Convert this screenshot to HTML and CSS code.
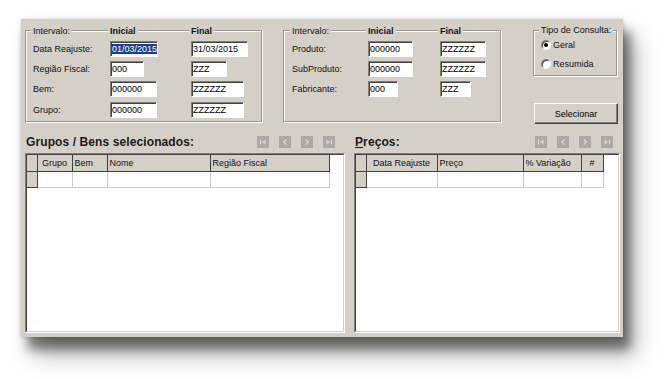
FILE: index.html
```html
<!DOCTYPE html>
<html lang="pt">
<head>
<meta charset="utf-8">
<title>Reajuste de Preços</title>
<link rel="stylesheet" href="styles.css">
</head>
<body>
<div class="window">
  <div class="top">
    <div class="group g1">
      <div class="fields">
        <div class="cap"><span>Intervalo:</span></div>
        <div class="cap b"><span>Inicial</span></div>
        <div class="cap b"><span>Final</span></div>

        <div class="lbl">Data Reajuste:</div>
        <div class="inp w48"><span class="sel">01/03/2015</span></div>
        <div class="inp w57">31/03/2015</div>

        <div class="lbl">Região Fiscal:</div>
        <div class="inp w34">000</div>
        <div class="inp w36">ZZZ</div>

        <div class="lbl">Bem:</div>
        <div class="inp w47">000000</div>
        <div class="inp w53">ZZZZZZ</div>

        <div class="lbl">Grupo:</div>
        <div class="inp w47">000000</div>
        <div class="inp w53">ZZZZZZ</div>
      </div>
    </div>

    <div class="group g2">
      <div class="fields">
        <div class="cap"><span>Intervalo:</span></div>
        <div class="cap b"><span>Inicial</span></div>
        <div class="cap b"><span>Final</span></div>

        <div class="lbl">Produto:</div>
        <div class="inp w45">000000</div>
        <div class="inp w46">ZZZZZZ</div>

        <div class="lbl">SubProduto:</div>
        <div class="inp w45">000000</div>
        <div class="inp w46">ZZZZZZ</div>

        <div class="lbl">Fabricante:</div>
        <div class="inp w30">000</div>
        <div class="inp w31">ZZZ</div>
      </div>
    </div>

    <div class="side">
      <div class="group g3">
        <div class="cap"><span>Tipo de Consulta:</span></div>
        <div class="radio"><span class="dot on"></span>Geral</div>
        <div class="radio r2"><span class="dot"></span>Resumida</div>
      </div>
      <div class="btn">Selecionar</div>
    </div>
  </div>

  <div class="bottom">
    <div class="panel p1">
      <div class="head">
        <h2 class="title">Grupos / Bens selecionados:</h2>
        <div class="nav">
          <svg class="nb" viewBox="0 0 12 12"><rect width="12" height="12" fill="#aba9a5"/><path d="M3.5 3.5v5" stroke="#d9d7d1" stroke-width="1.3"/><path d="M8.5 3.2 5 6l3.5 2.8z" fill="#d9d7d1"/></svg>
          <svg class="nb" viewBox="0 0 12 12"><rect width="12" height="12" fill="#aba9a5"/><path d="M7.3 3.5 4.8 6l2.5 2.5" stroke="#d9d7d1" stroke-width="1.3" fill="none"/></svg>
          <svg class="nb" viewBox="0 0 12 12"><rect width="12" height="12" fill="#aba9a5"/><path d="M4.7 3.5 7.2 6 4.7 8.5" stroke="#d9d7d1" stroke-width="1.3" fill="none"/></svg>
          <svg class="nb" viewBox="0 0 12 12"><rect width="12" height="12" fill="#aba9a5"/><path d="M3.5 3.2 7 6 3.5 8.8z" fill="#d9d7d1"/><path d="M8.5 3.5v5" stroke="#d9d7d1" stroke-width="1.3"/></svg>
        </div>
      </div>
      <div class="gridbox">
        <div class="gridin">
          <table class="t1">
            <colgroup><col class="c10"><col class="c35"><col class="c35"><col class="c103"><col class="c119"></colgroup>
            <thead>
              <tr><th></th><th class="ctr">Grupo</th><th>Bem</th><th>Nome</th><th>Região Fiscal</th></tr>
            </thead>
            <tbody>
              <tr><td class="ind"></td><td></td><td></td><td></td><td></td></tr>
            </tbody>
          </table>
        </div>
      </div>
    </div>

    <div class="panel p2">
      <div class="head">
        <h2 class="title"><u>P</u>reços:</h2>
        <div class="nav">
          <svg class="nb" viewBox="0 0 12 12"><rect width="12" height="12" fill="#aba9a5"/><path d="M3.5 3.5v5" stroke="#d9d7d1" stroke-width="1.3"/><path d="M8.5 3.2 5 6l3.5 2.8z" fill="#d9d7d1"/></svg>
          <svg class="nb" viewBox="0 0 12 12"><rect width="12" height="12" fill="#aba9a5"/><path d="M7.3 3.5 4.8 6l2.5 2.5" stroke="#d9d7d1" stroke-width="1.3" fill="none"/></svg>
          <svg class="nb" viewBox="0 0 12 12"><rect width="12" height="12" fill="#aba9a5"/><path d="M4.7 3.5 7.2 6 4.7 8.5" stroke="#d9d7d1" stroke-width="1.3" fill="none"/></svg>
          <svg class="nb" viewBox="0 0 12 12"><rect width="12" height="12" fill="#aba9a5"/><path d="M3.5 3.2 7 6 3.5 8.8z" fill="#d9d7d1"/><path d="M8.5 3.5v5" stroke="#d9d7d1" stroke-width="1.3"/></svg>
        </div>
      </div>
      <div class="gridbox">
        <div class="gridin">
          <table class="t2">
            <colgroup><col class="c10"><col class="c71"><col class="c86"><col class="c58"><col class="c22"></colgroup>
            <thead>
              <tr><th></th><th class="ctr">Data Reajuste</th><th>Preço</th><th>% Variação</th><th class="ctr">#</th></tr>
            </thead>
            <tbody>
              <tr><td class="ind"></td><td></td><td></td><td></td><td></td></tr>
            </tbody>
          </table>
        </div>
      </div>
    </div>
  </div>
</div>
</body>
</html>
```

FILE: styles.css
```css
* { box-sizing: border-box; }

html { background: #fff; }

body {
  margin: 0;
  padding: 19px 0 42px 21px;
  min-height: 379px;
  background: #fff;
  font-family: "Liberation Sans", Arial, sans-serif;
  font-size: 9px;
  color: #111;
}

.window {
  width: 602px;
  height: 318px;
  background: #d4d0c8;
  padding: 11px 3px 4px 4px;
  display: flex;
  flex-direction: column;
  box-shadow: 7px 12px 10px rgba(0, 0, 0, 0.45), 12px 18px 22px rgba(0, 0, 0, 0.3), 0 0 4px rgba(0, 0, 0, 0.18);
}

/* ---------- top area ---------- */
.top {
  display: flex;
  align-items: flex-start;
  height: 94px;
}

.group {
  border: 1px solid #9a978f;
  box-shadow: inset 1px 1px 0 #fff, 1px 1px 0 #fff;
}

.g1 { width: 237px; height: 92px; padding-left: 7px; }
.g2 { width: 218px; height: 92px; margin-left: 21px; padding-left: 8px; }

.fields {
  display: grid;
  grid-template-rows: 11px repeat(4, 16px);
  row-gap: 4.3px;
  margin-top: -5.5px;
  align-items: center;
}
.g1 .fields { grid-template-columns: 77px 81px 1fr; }
.g2 .fields { grid-template-columns: 76px 72px 1fr; }

.cap {
  height: 11px;
  line-height: 11px;
  white-space: nowrap;
}
.cap span {
  background: #d4d0c8;
  padding: 0 2px;
  margin-left: -2px;
}
.cap.b { font-weight: bold; }

.lbl { white-space: nowrap; }

.inp {
  height: 16px;
  background: #fff;
  border: 1px solid;
  border-color: #808080 #fff #fff #808080;
  box-shadow: inset 1px 1px 0 #404040;
  padding-left: 1px;
  line-height: 14px;
  white-space: nowrap;
  overflow: hidden;
  color: #000;
}
.w30 { width: 30px; } .w31 { width: 31px; } .w34 { width: 34px; } .w36 { width: 36px; }
.w45 { width: 45px; } .w46 { width: 46px; } .w47 { width: 47px; } .w48 { width: 48px; }
.w53 { width: 53px; } .w57 { width: 57px; }

.sel {
  background: #1d3f8a;
  color: #fff;
}

/* right column */
.side {
  margin-left: 32px;
  width: 85px;
  display: flex;
  flex-direction: column;
}
.g3 {
  width: 84px;
  height: 46px;
  padding-left: 7px;
  display: flex;
  flex-direction: column;
}
.g3 .cap { margin-top: -6px; }

.radio {
  display: flex;
  align-items: center;
  gap: 2px;
  height: 12px;
  margin-top: 3px;
  white-space: nowrap;
}
.radio.r2 { margin-top: 7px; }

.dot {
  width: 10px;
  height: 10px;
  border-radius: 50%;
  background: #fff;
  border: 1px solid;
  border-color: #808080 #f4f4f4 #f4f4f4 #808080;
  box-shadow: inset 1px 1px 0 #404040;
  display: flex;
  align-items: center;
  justify-content: center;
}
.dot.on::after {
  content: "";
  width: 4px;
  height: 4px;
  border-radius: 50%;
  background: #000;
}

.btn {
  margin-top: 27px;
  margin-left: 1px;
  width: 84px;
  height: 21px;
  border: 1px solid;
  border-color: #fff #404040 #404040 #fff;
  box-shadow: inset -1px -1px 0 #808080;
  display: flex;
  align-items: center;
  justify-content: center;
  color: #000;
}

/* ---------- bottom area ---------- */
.bottom {
  display: flex;
  gap: 9px;
  margin-top: 7px;
  flex: 1;
}
.panel {
  display: flex;
  flex-direction: column;
}
.p1 { width: 320px; }
.p2 { width: 266px; }

.head {
  height: 22px;
  display: flex;
  align-items: center;
  justify-content: space-between;
  padding-left: 1px;
}
.title {
  margin: 0;
  font-size: 12px;
  font-weight: bold;
  letter-spacing: 0.1px;
  color: #1a1a1a;
}
.title u { text-underline-offset: 1px; }

.nav { display: flex; gap: 10px; }
.p1 .nav { margin-right: 10px; }
.p2 .nav { margin-right: 7px; }
.nb { width: 12px; height: 12px; display: block; }

.gridbox {
  flex: 1;
  border: 1px solid;
  border-color: #808080 #fff #fff #808080;
}
.gridin {
  height: 100%;
  background: #fff;
  border: 1px solid;
  border-color: #404040 #d4d0c8 #d4d0c8 #404040;
}

table {
  border-collapse: collapse;
  table-layout: fixed;
}
.t1 { width: 302px; }
.t2 { width: 247px; }
.c10 { width: 10px; } .c22 { width: 22px; } .c35 { width: 35px; } .c58 { width: 58px; }
.c71 { width: 71px; } .c86 { width: 86px; } .c103 { width: 103px; } .c119 { width: 119px; }

th {
  background: #d4d0c8;
  font-weight: normal;
  height: 16px;
  border-right: 1px solid #404040;
  border-bottom: 1px solid #404040;
  text-align: left;
  padding: 0 0 0 2px;
  white-space: nowrap;
  color: #111;
}
th.ctr { text-align: center; padding: 0; }

td {
  height: 16px;
  padding: 0;
  border-right: 1px solid #cbcbcb;
  border-bottom: 1px solid #cbcbcb;
}
td.ind {
  background: #d4d0c8;
  border-right-color: #404040;
  border-bottom-color: #404040;
}
```
